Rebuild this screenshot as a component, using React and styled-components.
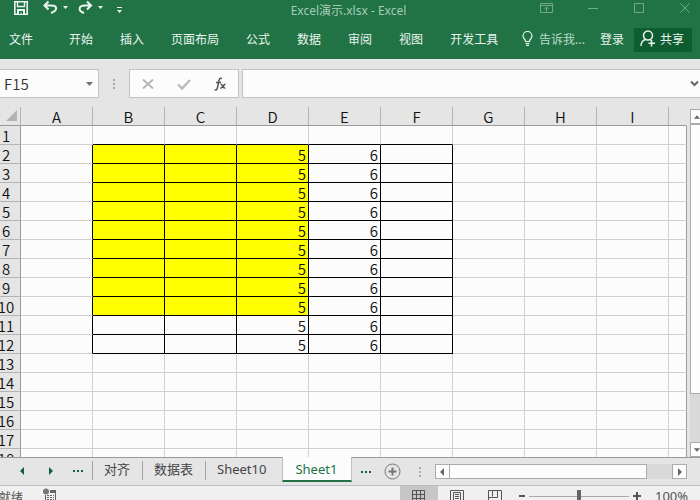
import React, { useState } from "react";
import styled, { createGlobalStyle, css } from "styled-components";

const green = "#217346";
const panel = "#e5e5e5";
const sheet = "#fcfcfc";
const line = "#d0d0d0";
const edge = "#9a9a9a";
const ui = '"Noto Sans", "Noto Sans CJK SC", sans-serif';
const cjk = '"Noto Sans CJK SC", sans-serif';

const Global = createGlobalStyle`
  * { box-sizing: border-box; }
  body { margin: 0; overflow: hidden; background: ${panel}; font-family: ${cjk}; }
  button, input { font: inherit; margin: 0; padding: 0; border: 0; border-radius: 0; background: none; color: inherit; }
  svg { display: block; }
`;

const Window = styled.div`
  height: 100vh;
  display: flex;
  flex-direction: column;
  overflow: hidden;
`;

/* Title bar and ribbon */
const Header = styled.header`
  background: ${green};
  color: #e9f5ee;
  height: 59px;
  flex: none;
  font-size: 12px;
`;
const TitleBar = styled.div`
  height: 22px;
  display: grid;
  grid-template-columns: 1fr auto 1fr;
  align-items: start;
`;
const QuickAccess = styled.div`
  display: flex;
  padding-left: 14px;
`;
const Bare = styled.button`
  display: flex;
  align-items: center;
  justify-content: center;
  flex: none;
`;
const Title = styled.div`
  line-height: 22px;
  padding-right: 3px;
  color: #a5cdb6;
  font-family: ${ui};
`;
const WindowButtons = styled.div`
  display: flex;
  justify-content: flex-end;
  gap: 32px;
  padding: 2px 8px 0 0;
  color: #74a98a;
`;
const Ribbon = styled.nav`
  display: flex;
  align-items: center;
  height: 35px;
  padding: 0 8px 0 9px;
`;
const RibbonTabs = styled.div`
  display: flex;
  flex: 1;
  gap: 27px;
  padding-left: 36px;
`;
const RibbonTab = styled.button`
  line-height: 20px;
  padding-bottom: 2px;
  white-space: nowrap;
`;
const Tell = styled(RibbonTab)`
  display: flex;
  align-items: center;
  gap: 6px;
  color: #bcdcc9;
  margin-right: 15px;
`;
const Share = styled(RibbonTab)`
  display: flex;
  align-items: center;
  gap: 4px;
  height: 24px;
  margin-left: 10px;
  padding: 0 8px 2px 6px;
  background: #0f5c30;
`;

/* Formula bar */
const FormulaBar = styled.div`
  display: flex;
  flex: none;
  align-items: flex-end;
  height: 39px;
`;
const Box = styled.div`
  display: flex;
  align-items: center;
  height: 29px;
  background: ${sheet};
  border: 1px solid #c3c3c3;
`;
const NameBox = styled(Box)`
  width: 99px;
  border-left: 0;
  padding: 0 4px;
  input {
    flex: 1;
    min-width: 0;
    font-size: 15px;
    font-weight: 350;
    color: #333;
  }
  button {
    color: #707070;
  }
`;
const Gripper = styled.div`
  width: 30px;
  display: flex;
  align-self: stretch;
  align-items: center;
  justify-content: center;
  color: #a8a8a8;
`;
const BarGripper = styled(Gripper)`
  align-self: flex-end;
  height: 29px;
`;
const FormulaTools = styled(Box)`
  width: 110px;
  justify-content: space-between;
  padding: 0 11px;
  margin-right: 3px;
`;
const FormulaInput = styled(Box)`
  flex: 1;
  border-right: 0;
  input {
    flex: 1;
    min-width: 0;
    height: 100%;
  }
`;

/* Grid */
const Workspace = styled.main`
  flex: 1;
  min-height: 0;
  display: flex;
  gap: 3px;
`;
const GridArea = styled.div`
  flex: 1;
  min-width: 0;
  padding-top: 9px;
  overflow: hidden;
`;
const Grid = styled.table`
  width: 100%;
  table-layout: fixed;
  border-collapse: separate;
  border-spacing: 0;
  font-size: 15px;
  font-weight: 350;
  line-height: 18px;
  color: #111;
  th {
    font-weight: 350;
  }
  tr {
    height: 19px;
  }
`;
const Col = styled.col`
  width: ${(p) => p.$w}px;
`;
const ColHead = styled.th`
  height: 19px;
  padding: 0;
  background: ${panel};
  border-bottom: 1px solid ${edge};
  border-right: 1px solid #b4b4b4;
  &:last-child {
    border-right-color: ${panel};
  }
  span {
    display: block;
    height: 18px;
    line-height: 20px;
  }
  svg {
    margin-left: 6px;
  }
`;
const RowHead = styled.th`
  height: 19px;
  padding: 0;
  background: ${panel};
  border-right: 1px solid ${edge};
  border-bottom: 1px solid #b4b4b4;
  span {
    display: block;
    height: 18px;
    margin-left: -8px;
    line-height: 20px;
  }
`;
const Cell = styled.td`
  height: 19px;
  padding: 0 2px 0 0;
  text-align: right;
  background: ${(p) => (p.$filled ? "#ffff00" : sheet)};
  border-right: 1px solid ${(p) => (p.$right ? "#000" : line)};
  border-bottom: 1px solid ${(p) => (p.$bottom ? "#000" : line)};
  &:last-child {
    border-right-color: ${edge};
  }
  span {
    display: block;
    height: 18px;
    line-height: 20px;
  }
`;

/* Scroll bars */
const scrollPiece = css`
  background: ${sheet};
  border: 1px solid #ababab;
  color: #666;
`;
const VScroll = styled.div`
  width: 10px;
  display: flex;
  flex-direction: column;
  margin-top: 11px;
  background: #d9d9d9;
`;
const VButton = styled(Bare)`
  ${scrollPiece}
  height: 15px;
  width: 10px;
  border-right: 0;
  overflow: hidden;
  justify-content: flex-start;
  padding-left: 2px;
`;
const VThumb = styled.div`
  ${scrollPiece}
  flex: 270;
  border-right: 0;
`;
const VTrack = styled.div`
  flex: 48;
`;
const HScroll = styled.div`
  flex: 1;
  height: 15px;
  margin-right: 13px;
  display: flex;
  background: #d9d9d9;
`;
const HButton = styled(Bare)`
  ${scrollPiece}
  width: 15px;
`;
const HThumb = styled.div`
  ${scrollPiece}
  flex: 195;
  border-left: 0;
`;
const HTrack = styled.div`
  flex: 25;
`;

/* Sheet tabs */
const SheetBar = styled.div`
  flex: none;
  display: flex;
  height: 29px;
  border-top: 1px solid ${edge};
  border-bottom: 1px solid #bdbdbd;
  align-items: center;
`;
const SheetNav = styled.div`
  display: flex;
  align-self: flex-start;
  height: 25px;
  padding-left: 8px;
`;
const NavButton = styled(Bare)`
  width: 28px;
  color: #12603a;
`;
const Tabs = styled.div`
  display: flex;
  align-self: flex-start;
  align-items: flex-start;
  font-size: 13px;
  font-family: ${ui};
  color: #444;
`;
const Tab = styled.button`
  height: 19px;
  margin-top: 3px;
  line-height: 16px;
  padding: 0 12px 3px 11px;
  border-left: ${(p) => (p.$rule ? "1px solid #a3a3a3" : "0")};
  white-space: nowrap;
  ${(p) =>
    p.$active &&
    css`
      height: 25px;
      margin-top: -1px;
      margin-left: 4px;
      padding: 3px 14px 2px 12px;
      background: ${sheet};
      color: ${green};
      border-left: 1px solid #c0c0c0;
      border-right: 1px solid #c0c0c0;
      border-bottom: 2px solid ${green};
    `}
`;

/* Status bar */
const StatusBar = styled.footer`
  flex: none;
  height: 14px;
  overflow: hidden;
  background: #f0f0f0;
  color: #555;
`;
const StatusRow = styled.div`
  height: 20px;
  display: flex;
  align-items: center;
  font-size: 12px;
`;
const Ready = styled.span`
  flex: 1;
  display: flex;
  align-items: center;
  gap: 20px;
  margin-left: -1px;
`;
const ViewButton = styled(Bare)`
  width: 38px;
  height: 20px;
  background: ${(p) => (p.$on ? "#c6c6c6" : "transparent")};
`;
const Zoom = styled.div`
  display: flex;
  align-items: center;
  margin-left: 5px;
  gap: 4px;
`;
const Slider = styled.input`
  appearance: none;
  width: 100px;
  height: 12px;
  background: linear-gradient(#aaa, #aaa) center / 100% 1px no-repeat;
  &::-webkit-slider-thumb {
    appearance: none;
    width: 4px;
    height: 12px;
    background: #666;
  }
`;
const Percent = styled.output`
  width: 45px;
  margin-left: 10px;
  font-family: ${ui};
  font-size: 13px;
`;

const Tri = ({ d, w, h }) => (
  <svg width={w} height={h} viewBox={`0 0 ${w} ${h}`}>
    <path d={d} fill="currentColor" />
  </svg>
);

const Dots = () => (
  <svg width="3" height="12" viewBox="0 0 3 12" fill="currentColor">
    <path d="M0 1h2v2H0zM0 5h2v2H0zM0 9h2v2H0z" />
  </svg>
);

const Ellipsis = () => (
  <svg width="11" height="3" viewBox="0 0 11 3" fill="currentColor">
    <path d="M0 1h2v2H0zM4 1h2v2H4zM8 1h2v2H8z" />
  </svg>
);

const QuickIcons = () => (
  <QuickAccess>
    <Bare aria-label="保存">
      <svg width="14" height="16" viewBox="0 0 14 16" fill="none" stroke="currentColor" strokeWidth="1.6">
        <path d="M.8 1.8h12.4v12.4H.8z" />
        <path d="M3.5 2v4.5h7V2" strokeWidth="1.4" />
        <path d="M3 9h8v5.5H3z" fill="currentColor" stroke="none" />
        <path d="M5 11h4v3H7.5v-1.5h-1V14H5z" fill={green} stroke="none" />
      </svg>
    </Bare>
    <Bare aria-label="撤消">
      <svg width="43" height="16" viewBox="0 0 43 16" fill="none" stroke="currentColor" strokeWidth="2">
        <path d="M20.5 1.5l-4 4 4 4M17 5.5h6.5c6 0 6.500 5-.5 7.500" />
        <path d="M35 6h5l-2.500 3z" fill="currentColor" stroke="none" />
      </svg>
    </Bare>
    <Bare aria-label="恢复">
      <svg width="35" height="16" viewBox="0 0 35 16" fill="none" stroke="currentColor" strokeWidth="2">
        <path d="M16 1.5l4 4-4 4M19.5 5.5h-5.5c-7 0-7 5.5-1 7.5" />
        <path d="M27 6h5l-2.500 3z" fill="currentColor" stroke="none" />
      </svg>
    </Bare>
    <Bare aria-label="自定义快速访问工具栏">
      <svg width="24" height="16" viewBox="0 0 24 16" fill="currentColor">
        <path d="M11 7h5v1h-5zM11 10h5l-2.500 3z" />
      </svg>
    </Bare>
  </QuickAccess>
);

const columns = ["A", "B", "C", "D", "E", "F", "G", "H", "I", ""];
const rows = Array.from({ length: 18 }, (_, i) => i + 1);
const ribbonTabs = ["开始", "插入", "页面布局", "公式", "数据", "审阅", "视图", "开发工具"];
const sheetTabs = ["对齐", "数据表", "Sheet10", "Sheet1"];

const cellValue = (r, c) => (r >= 2 && r <= 12 ? { 3: "5", 4: "6" }[c] || "" : "");

function Sheet() {
  return (
    <Grid>
      <colgroup>
        <Col $w={21} />
        {columns.map((c, i) => (c ? <Col key={i} $w={72} /> : <col key={i} />))}
      </colgroup>
      <thead>
        <tr>
          <ColHead aria-label="全选">
            <svg width="12" height="12" viewBox="0 0 12 12">
              <path d="M11 0v11H0z" fill="#b3b3b3" />
            </svg>
          </ColHead>
          {columns.map((c, i) => (
            <ColHead key={i}>
              <span>{c}</span>
            </ColHead>
          ))}
        </tr>
      </thead>
      <tbody>
        {rows.map((r) => (
          <tr key={r}>
            <RowHead>
              <span>{r}</span>
            </RowHead>
            {columns.map((_, c) => (
              <Cell
                key={c}
                $filled={r >= 2 && r <= 10 && c >= 1 && c <= 3}
                $right={r >= 2 && r <= 12 && c <= 5}
                $bottom={r <= 12 && c >= 1 && c <= 5}
              >
                <span>{cellValue(r, c)}</span>
              </Cell>
            ))}
          </tr>
        ))}
      </tbody>
    </Grid>
  );
}

export default function App() {
  const [active, setActive] = useState("Sheet1");
  const [zoom, setZoom] = useState(100);
  return (
    <Window>
      <Global />
      <Header>
        <TitleBar>
          <QuickIcons />
          <Title>Excel演示.xlsx - Excel</Title>
          <WindowButtons>
            <Bare aria-label="功能区显示选项">
              <svg width="14" height="12" viewBox="0 0 14 12" fill="none" stroke="currentColor">
                <path d="M.5 1.5h12v9H.5zM.5 3.5h12M6.5 9.5v-4M4.500 7l2-2 2 2" />
              </svg>
            </Bare>
            <Bare aria-label="最小化">
              <svg width="14" height="12" viewBox="0 0 14 12" fill="none" stroke="currentColor">
                <path d="M2 6.5h10" />
              </svg>
            </Bare>
            <Bare aria-label="最大化">
              <svg width="14" height="12" viewBox="0 0 14 12" fill="none" stroke="currentColor">
                <path d="M2.5 1.5h9v9h-9z" />
              </svg>
            </Bare>
            <Bare aria-label="关闭">
              <svg width="14" height="12" viewBox="0 0 14 12" fill="none" stroke="currentColor">
                <path d="M2.5 1.5l9 9M11.5 1.5l-9 9" />
              </svg>
            </Bare>
          </WindowButtons>
        </TitleBar>
        <Ribbon>
          <RibbonTab>文件</RibbonTab>
          <RibbonTabs>
            {ribbonTabs.map((t) => (
              <RibbonTab key={t}>{t}</RibbonTab>
            ))}
          </RibbonTabs>
          <Tell>
            <svg width="11" height="15" viewBox="0 0 11 15" fill="none" stroke="#e9f5ee" strokeWidth="1.2">
              <path d="M3.5 10.5C3.5 8 1 7.5 1 5a4.500 4.500 0 0 1 9 0c0 2.500-2.500 3-2.500 5.500zM3.500 12.500h4M4 14.300h3" />
            </svg>
            告诉我...
          </Tell>
          <RibbonTab>登录</RibbonTab>
          <Share>
            <svg width="16" height="17" viewBox="0 0 16 17" fill="none" stroke="currentColor" strokeWidth="1.5">
              <circle cx="8" cy="5.5" r="4.5" />
              <path d="M1 16c0-3.500 1.500-5.500 4.500-6.500M10 9.500l1.500 1M11.500 10v6.500M8.500 13.200h6.500" />
            </svg>
            共享
          </Share>
        </Ribbon>
      </Header>

      <FormulaBar>
        <NameBox>
          <input aria-label="名称框" defaultValue="F15" />
          <Bare aria-label="名称框列表">
            <Tri w={9} h={6} d="M1 1h7L4.500 5z" />
          </Bare>
        </NameBox>
        <BarGripper>
          <Dots />
        </BarGripper>
        <FormulaTools>
          <Bare aria-label="取消">
            <svg width="14" height="14" viewBox="0 0 14 14" stroke="#b5b5b5" strokeWidth="1.8">
              <path d="M2 2.500l10 9M12 2.500l-10 9" />
            </svg>
          </Bare>
          <Bare aria-label="输入">
            <svg width="14" height="14" viewBox="0 0 14 14" fill="none" stroke="#b9b9b9" strokeWidth="2.4">
              <path d="M1 7.500l4 4L13 3" />
            </svg>
          </Bare>
          <Bare aria-label="插入函数">
            <svg width="14" height="14" viewBox="0 0 14 14" fill="none" stroke="#555" strokeWidth="1.5">
              <path d="M9 1.500C7 .5 6.200 2 5.700 4.500L4.500 10.500C4 13 3 13.500 1.500 12.500M3 5.500h5" />
              <path d="M7.500 7.200c2-.8 2.200 4.800 4.800 3.800M12.500 7.200c-2-.3-2.800 4.500-5.200 3.800" />
            </svg>
          </Bare>
        </FormulaTools>
        <FormulaInput>
          <input aria-label="编辑栏" />
          <Bare aria-label="展开编辑栏">
            <svg width="10" height="8" viewBox="0 0 10 8" fill="none" stroke="#666" strokeWidth="2">
              <path d="M1 1.500l3.500 3.500L8 1.500" />
            </svg>
          </Bare>
        </FormulaInput>
      </FormulaBar>

      <Workspace>
        <GridArea>
          <Sheet />
        </GridArea>
        <VScroll>
          <VButton aria-label="向上滚动">
            <Tri w={8} h={6} d="M1 5h7L4.500 1z" />
          </VButton>
          <VThumb />
          <VTrack />
          <VButton aria-label="向下滚动">
            <Tri w={8} h={6} d="M1 1h7L4.500 5z" />
          </VButton>
        </VScroll>
      </Workspace>

      <SheetBar>
        <SheetNav>
          <NavButton aria-label="上一张">
            <Tri w={5} h={8} d="M4 0v8L0 4z" />
          </NavButton>
          <NavButton aria-label="下一张">
            <Tri w={5} h={8} d="M1 0v8l4-4z" />
          </NavButton>
          <NavButton aria-label="更多工作表">
            <Ellipsis />
          </NavButton>
        </SheetNav>
        <Tabs>
          {sheetTabs.map((t, i) => (
            <Tab key={t} $active={t === active} $rule={i < 3 && t !== active} onClick={() => setActive(t)}>
              {t}
            </Tab>
          ))}
        </Tabs>
        <NavButton aria-label="后面的工作表">
          <Ellipsis />
        </NavButton>
        <Bare aria-label="新工作表">
          <svg width="25" height="18" viewBox="0 0 25 18" fill="none" stroke="#777">
            <circle cx="12.5" cy="8.5" r="7.5" />
            <path d="M12.500 4.500v8M8.500 8.500h8" strokeWidth="2" />
          </svg>
        </Bare>
        <Gripper>
          <Dots />
        </Gripper>
        <HScroll>
          <HButton aria-label="向左滚动">
            <Tri w={5} h={8} d="M4 0v8L0 4z" />
          </HButton>
          <HThumb />
          <HTrack />
          <HButton aria-label="向右滚动">
            <Tri w={5} h={8} d="M1 0v8l4-4z" />
          </HButton>
        </HScroll>
      </SheetBar>

      <StatusBar>
        <StatusRow>
          <Ready>
            就绪
            <Bare aria-label="宏录制">
              <svg width="14" height="16" viewBox="0 0 14 16" fill="none" stroke="#666">
                <path d="M2.500 7v7.500h10v-12H7" />
                <path d="M7 2h6v3H7z" fill="#666" stroke="none" />
                <circle cx="3" cy="3.500" r="3" fill="#777" stroke="none" />
                <path d="M4 7.500h7M4 9.500h7M4 11.500h7" strokeDasharray="2 1" />
              </svg>
            </Bare>
          </Ready>
          <ViewButton $on aria-label="普通">
            <svg width="14" height="14" viewBox="0 0 14 14" fill="none" stroke="#555">
              <path d="M.5 1.500h12v11H.5zM4.500 1.500v11M8.500 1.500v11M.5 5.500h12M.5 9.500h12" />
            </svg>
          </ViewButton>
          <ViewButton aria-label="页面布局">
            <svg width="14" height="14" viewBox="0 0 14 14" fill="none" stroke="#555">
              <path d="M.5 1.500h13v12H.5zM3.500 3.500h7v10h-7zM5 5.500h4M5 7.500h4M5 9.500h4" />
            </svg>
          </ViewButton>
          <ViewButton aria-label="分页预览">
            <svg width="14" height="14" viewBox="0 0 14 14" fill="none" stroke="#555">
              <path d="M.5 1.500h13v12H.5zM4.500 1.500v6M9.500 1.500v6M.5 8.500h9M9.500 1.500v7" />
            </svg>
          </ViewButton>
          <Zoom>
            <Bare aria-label="缩小">
              <svg width="6" height="10" viewBox="0 0 6 10">
                <path d="M0 4h6v2H0z" fill="#555" />
              </svg>
            </Bare>
            <Slider
              type="range"
              aria-label="缩放"
              min="0"
              max="200"
              value={zoom}
              onChange={(e) => setZoom(Number(e.target.value))}
            />
            <Bare aria-label="放大">
              <svg width="8" height="10" viewBox="0 0 8 10">
                <path d="M0 4h3V1h2v3h3v2H5v3H3V6H0z" fill="#555" />
              </svg>
            </Bare>
            <Percent>{zoom}%</Percent>
          </Zoom>
        </StatusRow>
      </StatusBar>
    </Window>
  );
}
